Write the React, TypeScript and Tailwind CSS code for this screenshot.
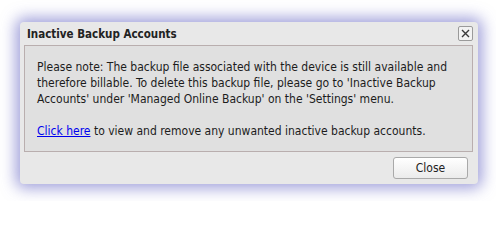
export default function App() {
  return (
    <div className="h-[201px] w-[496px] bg-white pl-[20px] pt-[22px] font-['DejaVu_Sans_Condensed',Tahoma,sans-serif] text-[12px] text-[#1c1c1c]">
      <div className="flex h-[162px] w-[458px] flex-col rounded-[4px] bg-[#e8e8e8] shadow-[0_0_15px_4px_rgba(92,92,192,0.6)]">
        {/* Header */}
        <div className="flex h-[23px] items-start justify-between pl-[7px] pr-[5px]">
          <span className="mt-[4px] text-[11.5px] leading-[16px] font-bold text-[#222]">
            Inactive Backup Accounts
          </span>
          <button
            className="mt-[4px] flex h-[15px] w-[15px] items-center justify-center rounded-[2px] border border-[#9a9a9a] bg-[#f2f2f2]"
            title="Close"
          >
            <svg width="9" height="9" viewBox="0 0 9 9">
              <path d="M1 1 L8 8 M8 1 L1 8" stroke="#3a3a3a" strokeWidth="1.4" />
            </svg>
          </button>
        </div>

        {/* Message */}
        <div className="mx-[4px] mr-[5px] h-[107px] border border-[#b9aeae] bg-[#e0e0e0] px-[12px] pt-[13px] leading-[16px]">
          <p>
            Please note: The backup file associated with the device is still available and therefore
            billable. To delete this backup file, please go to 'Inactive Backup Accounts' under
            'Managed Online Backup' on the 'Settings' menu.
          </p>
          <p className="mt-[16px]">
            <a href="#" className="text-[#0000ee] underline">Click here</a> to view and remove any
            unwanted inactive backup accounts.
          </p>
        </div>

        {/* Footer */}
        <div className="flex justify-end pr-[10px] pt-[5px]">
          <button className="h-[22px] w-[75px] rounded-[3px] border border-[#a9a9a9] bg-gradient-to-b from-white to-[#ebebeb] text-[12px] text-[#222]">
            Close
          </button>
        </div>
      </div>
    </div>
  )
}
